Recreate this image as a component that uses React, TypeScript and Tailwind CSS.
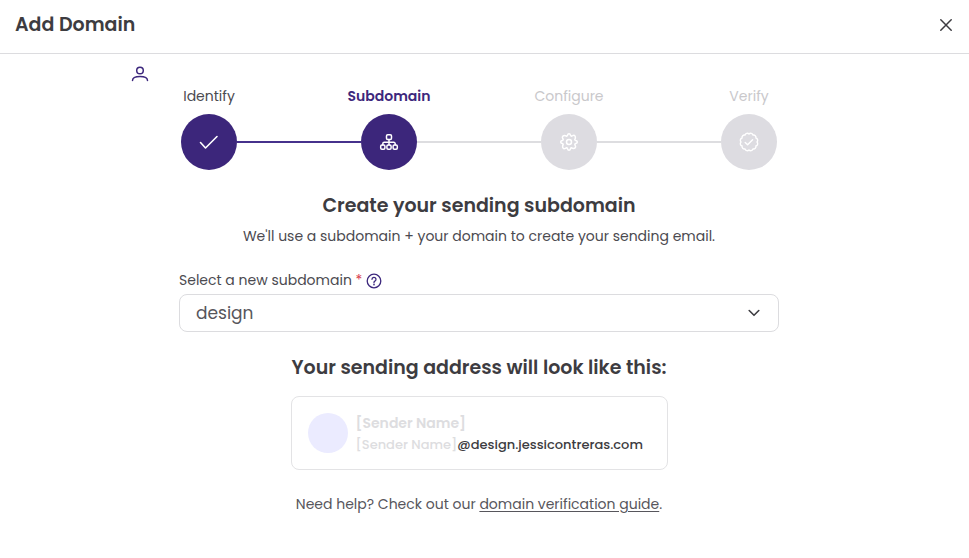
import { useState } from "react"
import type { ReactNode } from "react"
import clsx from "clsx"

type StepState = "done" | "current" | "upcoming"

function CheckIcon() {
  return (
    <svg width="20" height="20" viewBox="0 0 20 20" fill="none" stroke="currentColor" strokeWidth="1.6" strokeLinecap="round" strokeLinejoin="round" aria-hidden="true">
      <path d="M1.5 10.5 6.5 16 18 4.5" />
    </svg>
  )
}

function SitemapIcon() {
  return (
    <svg width="20" height="20" viewBox="0 0 20 20" fill="none" stroke="currentColor" strokeWidth="1.5" strokeLinecap="round" strokeLinejoin="round" aria-hidden="true">
      <rect x="7.5" y="2.7" width="5" height="4.8" rx="1.2" />
      <rect x="1.7" y="13" width="4.2" height="4.2" rx="1.2" />
      <rect x="7.9" y="13" width="4.2" height="4.2" rx="1.2" />
      <rect x="14.1" y="13" width="4.2" height="4.2" rx="1.2" />
      <path d="M10 7.5V13M3.8 13v-1.200a1.500 1.500 0 0 1 1.500-1.500h9.400a1.500 1.500 0 0 1 1.500 1.500V13" />
    </svg>
  )
}

function GearIcon() {
  return (
    <svg width="20" height="20" viewBox="0 0 20 20" fill="none" stroke="currentColor" strokeWidth="1.5" strokeLinejoin="round" aria-hidden="true">
      <path d="M8.500 3.300Q8.800 1.700 10 1.700T11.500 3.300Q11.800 4.300 12.700 4.200L13.700 3.700Q15.100 2.900 15.900 3.900T16.300 6.300L15.800 7.300Q15.700 8.200 16.700 8.500Q18.300 8.800 18.300 10T16.700 11.500Q15.700 11.800 15.800 12.700L16.300 13.700Q17.100 15.100 16.100 15.900T13.700 16.300L12.700 15.800Q11.800 15.700 11.500 16.700Q11.200 18.300 10 18.300T8.500 16.700Q8.200 15.700 7.300 15.800L6.300 16.300Q4.900 17.100 4.100 16.100T3.700 13.700L4.200 12.700Q4.300 11.800 3.300 11.500Q1.700 11.200 1.700 10T3.300 8.500Q4.300 8.200 4.200 7.300L3.700 6.300Q2.900 4.900 3.900 4.100T6.300 3.700L7.300 4.200Q8.200 4.300 8.500 3.300z" />
      <circle cx="10" cy="10" r="2.500" />
    </svg>
  )
}

function BadgeCheckIcon() {
  return (
    <svg width="20" height="20" viewBox="0 0 20 20" fill="none" stroke="currentColor" strokeWidth="1.400" strokeLinecap="round" strokeLinejoin="round" aria-hidden="true">
      <path d="M18 10A2.400 2.400 0 0 1 16.900 14A2.400 2.400 0 0 1 14 16.900A2.400 2.400 0 0 1 10 18A2.400 2.400 0 0 1 6 16.900A2.400 2.400 0 0 1 3.100 14A2.400 2.400 0 0 1 2 10A2.400 2.400 0 0 1 3.100 6A2.400 2.400 0 0 1 6 3.100A2.400 2.400 0 0 1 10 2A2.400 2.400 0 0 1 14 3.100A2.400 2.400 0 0 1 16.900 6A2.400 2.400 0 0 1 18 10z" />
      <path d="m6.200 10.500 2.400 2.200 5-5" />
    </svg>
  )
}

const steps: { label: string; state: StepState; icon: ReactNode }[] = [
  { label: "Identify", state: "done", icon: <CheckIcon /> },
  { label: "Subdomain", state: "current", icon: <SitemapIcon /> },
  { label: "Configure", state: "upcoming", icon: <GearIcon /> },
  { label: "Verify", state: "upcoming", icon: <BadgeCheckIcon /> },
]

function Stepper() {
  return (
    <ol className="flex">
      {steps.map((step, i) => (
        <li
          key={step.label}
          aria-current={step.state === "current" ? "step" : undefined}
          className="flex flex-1 flex-col items-center gap-1.5"
        >
          <span
            className={clsx(
              "text-sm leading-6",
              step.state === "done" && "text-[#4b4a50]",
              step.state === "current" && "font-semibold text-[#3d287d]",
              step.state === "upcoming" && "text-[#c9c8cb]"
            )}
          >
            {step.label}
          </span>
          <div className="flex w-full items-center">
            <span
              className={clsx(
                "h-0.5 flex-1",
                i > 0 && (step.state === "upcoming" ? "bg-[#dddde0]" : "bg-[#46318c]")
              )}
            />
            <span
              className={clsx(
                "flex size-14 items-center justify-center rounded-full text-white",
                step.state === "upcoming" ? "bg-[#dddce1]" : "bg-[#3c267b]"
              )}
            >
              {step.icon}
            </span>
            <span
              className={clsx(
                "h-0.5 flex-1",
                i < steps.length - 1 && (step.state === "done" ? "bg-[#46318c]" : "bg-[#dddde0]")
              )}
            />
          </div>
        </li>
      ))}
    </ol>
  )
}

export default function App() {
  const [subdomain, setSubdomain] = useState("design")

  return (
    <div className="min-h-screen bg-white font-['Poppins','Inter',sans-serif] text-[#3d3c41]">
      <header className="flex h-[54px] items-center justify-between border-b border-[#dcdcdf] px-[15px] pb-1">
        <h1 className="text-[19px] leading-7 font-semibold">Add Domain</h1>
        <button type="button" aria-label="Close" className="p-0.5">
          <svg width="12" height="12" viewBox="0 0 12 12" fill="none" stroke="currentColor" strokeWidth="1.500" strokeLinecap="round" aria-hidden="true">
            <path d="M.8.8l10.400 10.400M11.200.8.8 11.200" />
          </svg>
        </button>
      </header>

      <main className="flex flex-col items-center pt-3 pr-[11px] pb-8">
        <div className="w-full max-w-[720px]">
          <svg width="18" height="18" viewBox="0 0 18 18" fill="none" stroke="#3d287d" strokeWidth="1.500" strokeLinecap="round" className="ml-3" aria-hidden="true">
            <circle cx="9" cy="4.500" r="3.300" />
            <path d="M1.500 14.500c0-2.800 1.800-4 7.500-4s7.500 1.200 7.500 4" />
          </svg>
          <Stepper />
        </div>

        <h2 className="mt-[22px] text-[19px] leading-7 font-semibold">Create your sending subdomain</h2>
        <p className="mt-1 text-sm leading-6 text-[#4b4a50]">
          We&apos;ll use a subdomain + your domain to create your sending email.
        </p>

        <div className="mt-5 w-full max-w-[600px]">
          <div className="flex items-center gap-1 text-sm leading-6 text-[#4b4a50]">
            <label htmlFor="subdomain">
              Select a new subdomain <span className="text-[#d83a4e]">*</span>
            </label>
            <button type="button" aria-label="About subdomains" className="pt-0.5 text-[#3d287d]">
              <svg width="16" height="16" viewBox="0 0 16 16" fill="none" stroke="currentColor" strokeWidth="1.300" strokeLinecap="round" strokeLinejoin="round" aria-hidden="true">
                <circle cx="8" cy="8" r="6.800" />
                <path d="M6 6.300a2 2 0 1 1 2.900 1.800c-.6.300-.9.600-.9 1.300" />
                <circle cx="8" cy="11.500" r=".3" />
              </svg>
            </button>
          </div>
          <div className="mt-0.5 grid items-center">
            <select
              id="subdomain"
              value={subdomain}
              onChange={(e) => setSubdomain(e.target.value)}
              className="col-start-1 row-start-1 h-[38px] w-full appearance-none rounded-lg border border-[#dcdcdf] bg-white px-4 pt-0.5 text-[17px] text-[#57565c]"
            >
              <option value="design">design</option>
            </select>
            <svg width="12" height="8" viewBox="0 0 12 8" fill="none" stroke="currentColor" strokeWidth="1.600" strokeLinecap="round" strokeLinejoin="round" className="pointer-events-none col-start-1 row-start-1 mr-[19px] justify-self-end" aria-hidden="true">
              <path d="m1.200 1.500 4.800 4.800 4.800-4.800" />
            </svg>
          </div>
        </div>

        <h2 className="mt-[22px] text-[19px] leading-7 font-semibold">Your sending address will look like this:</h2>
        <div className="mt-3.5 flex min-w-[377px] items-center gap-2 rounded-lg border border-[#e3e3e5] px-4 py-3.5">
          <span className="size-10 rounded-full bg-[#ebebff]" />
          <div className="font-medium">
            <p className="text-sm leading-6 font-semibold text-[#dddde0]">[Sender Name]</p>
            <p className="text-[13px] leading-5">
              <span className="text-[#dddde0]">[Sender Name]</span>
              <span>@design.jessicontreras.com</span>
            </p>
          </div>
        </div>

        <p className="mt-[22px] text-sm leading-6 text-[#57565c]">
          Need help? Check out our{" "}
          <a href="#" className="underline underline-offset-2">
            domain verification guide
          </a>
          .
        </p>
      </main>
    </div>
  )
}
